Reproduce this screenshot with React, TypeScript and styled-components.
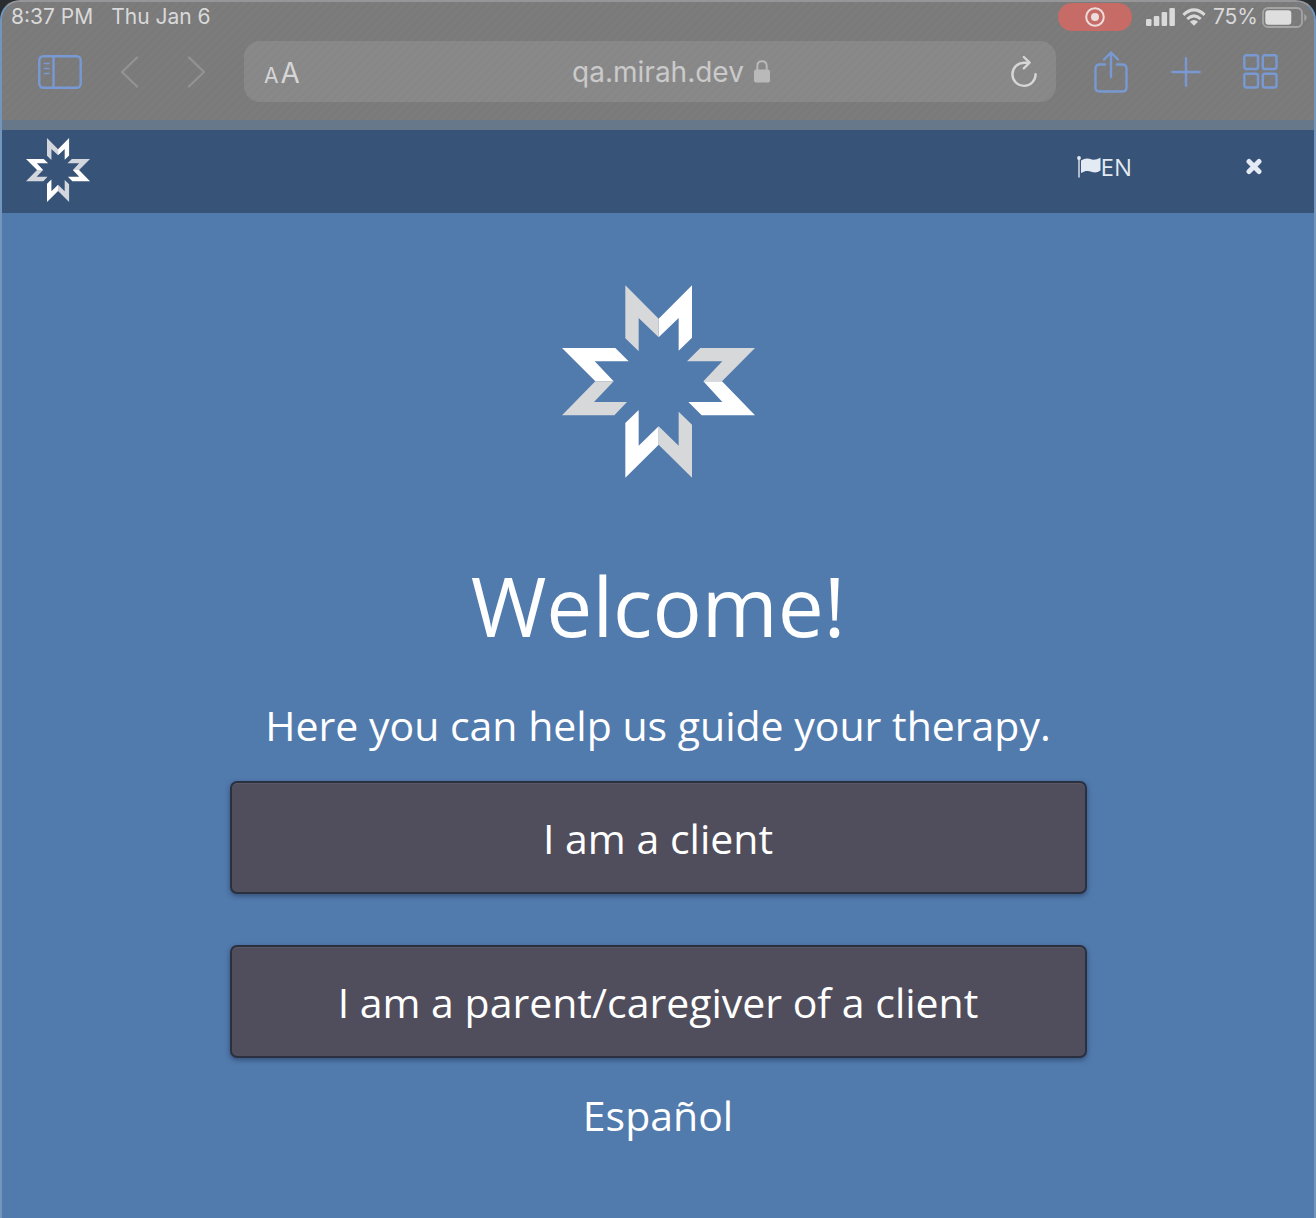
import React from "react";
import styled, { createGlobalStyle } from "styled-components";

const GlobalStyle = createGlobalStyle`
  *, *::before, *::after { box-sizing: border-box; }
  body { margin: 0; background: #2a2d30; }
  button, input { font: inherit; }
`;

const uiFont = `Inter, "Liberation Sans", sans-serif`;
const pageFont = `"Open Sans", "Noto Sans", sans-serif`;

const Device = styled.div`
  min-height: 100vh;
  border: 2px solid;
  border-color: #969698 #7496bd transparent #7496bd;
  border-bottom: 0;
  border-radius: 20px 20px 0 0;
  background: #517aad;
  overflow: hidden;
  display: flex;
  flex-direction: column;
`;

const Chrome = styled.header`
  background: repeating-linear-gradient(135deg, #7a7a7b 0 3px, #7d7c7c 3px 6px);
  border-bottom: 10px solid #67788b;
  color: #d9d9d9;
  font-family: ${uiFont};
`;

const StatusBar = styled.div`
  display: flex;
  justify-content: space-between;
  align-items: center;
  height: 30px;
  padding: 0 7px 0 9px;
  font-size: 21px;
  line-height: 30px;
`;

const StatusGroup = styled.div<{ $gap: number }>`
  display: flex;
  align-items: center;
  gap: ${(p) => p.$gap}px;
`;

const Recording = styled.button`
  display: grid;
  place-items: center;
  width: 74px;
  height: 28px;
  margin-right: 7px;
  padding: 0;
  border: 0;
  border-radius: 14px;
  background: #c66b65;
  color: #ecdcdc;
`;

const Toolbar = styled.div`
  display: grid;
  grid-template-columns: 168px 1fr 184px;
  align-items: center;
  column-gap: 38px;
  padding: 9px 36px 18px;
`;

const ToolGroup = styled.nav`
  display: flex;
  align-items: center;
  justify-content: space-between;
`;

const IconButton = styled.button<{ $dim?: boolean }>`
  display: flex;
  padding: 0;
  border: 0;
  background: none;
  color: ${(p) => (p.$dim ? "#929292" : "#7899d4")};
`;

const AddressBar = styled.div`
  display: grid;
  grid-template-columns: 70px 1fr 32px;
  align-items: center;
  height: 61px;
  padding: 0 16px 0 20px;
  border-radius: 16px;
  background: repeating-linear-gradient(135deg, #878788 0 3px, #8a898a 3px 6px);
`;

const TextSize = styled.button`
  display: flex;
  align-items: baseline;
  gap: 2px;
  padding: 6px 0 0;
  border: 0;
  background: none;
  color: #d6d6d6;
  font-size: 28px;
  line-height: 36px;
  small { font-size: 21px; }
`;

const Address = styled.div`
  display: flex;
  justify-content: center;
  align-items: center;
  gap: 10px;
  color: #cacaca;
  font-size: 28px;
  line-height: 36px;
`;

const Reload = styled.button`
  display: flex;
  justify-content: center;
  padding: 0;
  border: 0;
  background: none;
  color: #d6d6d6;
`;

const SiteBar = styled.div`
  display: flex;
  align-items: flex-start;
  justify-content: space-between;
  height: 83px;
  padding: 8px 52px 0 24px;
  background: #375377;
`;

const SiteActions = styled.div`
  display: flex;
  align-items: center;
  gap: 114px;
  height: 57px;
`;

const SiteButton = styled.button`
  display: flex;
  align-items: center;
  padding: 0;
  border: 0;
  background: none;
  color: #e4eaf3;
  font-family: ${pageFont};
  font-size: 24px;
  line-height: 32px;
`;

const Main = styled.main`
  display: flex;
  flex-direction: column;
  align-items: center;
  padding: 72px 24px 48px;
  color: #fff;
  font-family: ${pageFont};
  font-size: 41px;
  line-height: 56px;
  text-align: center;
`;

const Title = styled.h1`
  margin: 67px 0 0;
  font-size: 82px;
  line-height: 120px;
  font-weight: 400;
`;

const Lead = styled.p`
  margin: 32px 0 28px;
`;

const Choices = styled.div`
  display: grid;
  gap: 51px;
  width: 100%;
  max-width: 857px;
`;

const Choice = styled.button`
  height: 113px;
  padding: 0 24px;
  border: 2px solid #2b3040;
  border-radius: 7px;
  background: #504e5c;
  box-shadow: 0 2px 5px rgba(25, 40, 65, 0.5), inset 0 1px 0 #5b5966;
  color: #fff;
`;

const Language = styled.a`
  margin-top: 29px;
  color: #fff;
  text-decoration: none;
`;

function Logo({ size, shade }: { size: number; shade: string }) {
  return (
    <svg width={size} height={size} viewBox="62 46 579 579" role="img" aria-label="Mirah">
      <g fill="#fff">
        <path d="M452 47L352 147V203L412 145V243L452 204Z" />
        <path d="M62 235H222L262 275H160L217 335H162Z" />
        <path d="M641 437H481L441 397H543L486 335H542Z" />
        <path d="M252 624V460L292 421V528L352 470V525Z" />
      </g>
      <g fill={shade}>
        <path d="M252 47L352 147V203L292 145V245L252 206Z" />
        <path d="M62 437H219L257 397H158L217 335H162Z" />
        <path d="M641 235H477L437 275H543L486 335H542Z" />
        <path d="M452 624V465L412 426V528L352 470V525Z" />
      </g>
    </svg>
  );
}

const line = {
  fill: "none",
  stroke: "currentColor",
  strokeWidth: 2.4,
  strokeLinecap: "round" as const,
  strokeLinejoin: "round" as const,
};

const SidebarIcon = () => (
  <svg width="44" height="34" viewBox="0 0 44 34" {...line}>
    <rect x="1.3" y="1.3" width="41.4" height="31.4" rx="4" />
    <path d="M15.5 1.3V32.7" />
    <path d="M6.5 8.5H11M6.5 13.5H11M6.5 18.5H11" strokeWidth="1.7" />
  </svg>
);

const Chevron = ({ forward }: { forward?: boolean }) => (
  <svg width="19" height="32" viewBox="0 0 19 32" {...line}>
    <path d={forward ? "M2 1.5L17 16L2 30.5" : "M17 1.5L2 16L17 30.5"} />
  </svg>
);

const ShareIcon = () => (
  <svg width="34" height="42" viewBox="0 0 34 42" {...line}>
    <path d="M11 13.5H5.5Q1.5 13.5 1.5 17.5V36.5Q1.5 40.5 5.5 40.5H28.5Q32.5 40.5 32.5 36.5V17.5Q32.5 13.5 28.5 13.5H23" />
    <path d="M17 26V2M10 8.5L17 1.5L24 8.5" />
  </svg>
);

const PlusIcon = () => (
  <svg width="30" height="30" viewBox="0 0 30 30" {...line}>
    <path d="M15 1.3V28.7M1.3 15H28.7" />
  </svg>
);

const TabsIcon = () => (
  <svg width="35" height="35" viewBox="0 0 35 35" {...line}>
    <rect x="1.3" y="1.3" width="13.7" height="13.7" rx="2" />
    <rect x="19.8" y="1.3" width="13.7" height="13.7" rx="2" />
    <rect x="1.3" y="19.8" width="13.7" height="13.7" rx="2" />
    <rect x="19.8" y="19.8" width="13.7" height="13.7" rx="2" />
  </svg>
);

const LockIcon = () => (
  <svg width="16" height="23" viewBox="0 0 16 23">
    <rect y="9.5" width="16" height="13" rx="2" fill="#b9b9ba" />
    <path d="M3.3 10V6Q3.3 1.2 8 1.2T12.7 6V10" fill="none" stroke="#b9b9ba" strokeWidth="1.9" />
  </svg>
);

const ReloadIcon = () => (
  <svg width="28" height="34" viewBox="0 0 28 34" {...line}>
    <path d="M25.6 19.3A11.6 11.6 0 1 1 14 7.7H18.5" />
    <path d="M13.8 2L19.6 7.7L13.8 13.4" />
  </svg>
);

const RecordIcon = () => (
  <svg width="20" height="20" viewBox="0 0 20 20">
    <circle cx="10" cy="10" r="8.8" fill="none" stroke="currentColor" strokeWidth="2" />
    <circle cx="10" cy="10" r="4" fill="currentColor" />
  </svg>
);

const SignalIcon = () => (
  <svg width="29" height="18" viewBox="0 0 29 18" fill="currentColor">
    <rect y="11" width="5.5" height="7" rx="1.2" />
    <rect x="7.8" y="8" width="5.5" height="10" rx="1.2" />
    <rect x="15.6" y="4" width="5.5" height="14" rx="1.2" />
    <rect x="23.4" y="0" width="5.5" height="18" rx="1.2" />
  </svg>
);

const WifiIcon = () => (
  <svg width="24" height="18" viewBox="0 0 24 18">
    <g fill="none" stroke="currentColor" strokeWidth="3">
      <path d="M1.4 6.8Q12-3.2 22.6 6.8" />
      <path d="M5.3 11Q12 4.7 18.7 11" />
    </g>
    <path d="M12 17.8L7.9 13.7Q12 10.3 16.1 13.7Z" fill="currentColor" />
  </svg>
);

const BatteryIcon = () => (
  <svg width="45" height="21" viewBox="0 0 45 21">
    <rect x="1" y="1" width="39" height="19" rx="5" fill="none" stroke="#a5a5a5" strokeWidth="1.8" />
    <rect x="3.3" y="3.3" width="26" height="14.4" rx="3" fill="#dedede" />
    <path d="M42.3 7V14Q44.6 12.8 44.6 10.5T42.3 7Z" fill="#a5a5a5" />
  </svg>
);

const FlagIcon = () => (
  <svg width="24" height="22" viewBox="0 0 24 22" fill="currentColor">
    <circle cx="2" cy="2" r="1.9" />
    <path d="M1.3 2H2.7V21.5H1.3Z" />
    <path d="M4 4.5Q8.5 1.5 12.5 2.8C16.5 4.4 19 4 23.5 1.8V14.5Q19.5 17.3 15 16C11 14.4 8.5 14.5 4 17Z" />
  </svg>
);

const CloseIcon = () => (
  <svg width="16" height="17" viewBox="0 0 16 17">
    <path d="M3 3.5L13 13.5M13 3.5L3 13.5" stroke="currentColor" strokeWidth="5" strokeLinecap="round" />
  </svg>
);

export default function App() {
  return (
    <>
      <GlobalStyle />
      <Device>
        <Chrome>
          <StatusBar>
            <StatusGroup $gap={18}>
              <span>8:37 PM</span>
              <span>Thu Jan 6</span>
            </StatusGroup>
            <StatusGroup $gap={7}>
              <Recording aria-label="Screen recording"><RecordIcon /></Recording>
              <SignalIcon />
              <WifiIcon />
              <StatusGroup $gap={4}>
                <span>75%</span>
                <BatteryIcon />
              </StatusGroup>
            </StatusGroup>
          </StatusBar>
          <Toolbar>
            <ToolGroup aria-label="History">
              <IconButton aria-label="Sidebar"><SidebarIcon /></IconButton>
              <StatusGroup $gap={48}>
                <IconButton $dim aria-label="Back"><Chevron /></IconButton>
                <IconButton $dim aria-label="Forward"><Chevron forward /></IconButton>
              </StatusGroup>
            </ToolGroup>
            <AddressBar>
              <TextSize aria-label="Text size"><small>A</small><span>A</span></TextSize>
              <Address>
                <span>qa.mirah.dev</span>
                <LockIcon />
              </Address>
              <Reload aria-label="Reload"><ReloadIcon /></Reload>
            </AddressBar>
            <ToolGroup aria-label="Page tools">
              <IconButton aria-label="Share"><ShareIcon /></IconButton>
              <IconButton aria-label="New tab"><PlusIcon /></IconButton>
              <IconButton aria-label="Tabs"><TabsIcon /></IconButton>
            </ToolGroup>
          </Toolbar>
        </Chrome>
        <SiteBar>
          <Logo size={64} shade="#d3d7dd" />
          <SiteActions>
            <SiteButton><FlagIcon />EN</SiteButton>
            <SiteButton aria-label="Close"><CloseIcon /></SiteButton>
          </SiteActions>
        </SiteBar>
        <Main>
          <Logo size={193} shade="#d7d8da" />
          <Title>Welcome!</Title>
          <Lead>Here you can help us guide your therapy.</Lead>
          <Choices>
            <Choice>I am a client</Choice>
            <Choice>I am a parent/caregiver of a client</Choice>
          </Choices>
          <Language href="#es">Español</Language>
        </Main>
      </Device>
    </>
  );
}
